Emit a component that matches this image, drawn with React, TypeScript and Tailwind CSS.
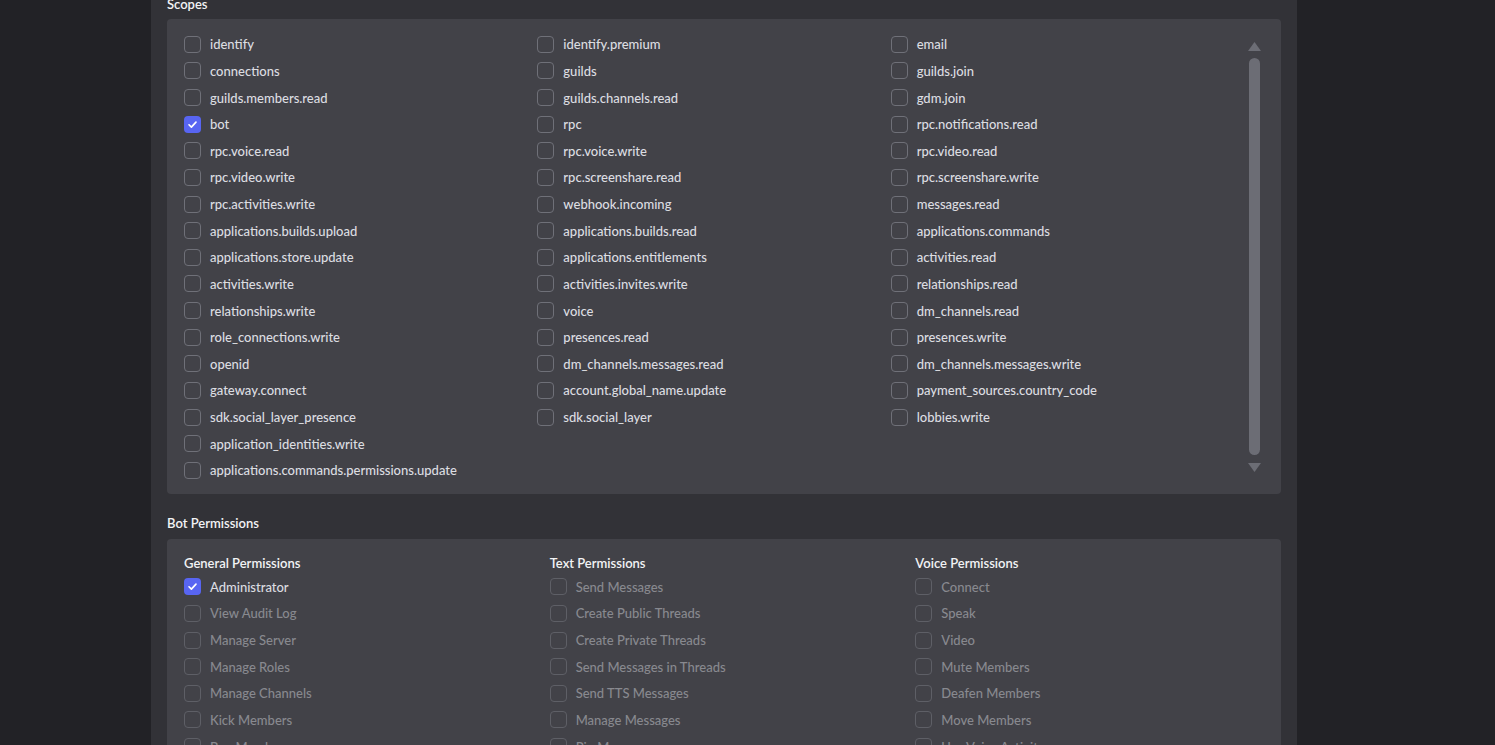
import clsx from 'clsx';

const scopeColumns: string[][] = [
  [
    'identify',
    'connections',
    'guilds.members.read',
    'bot',
    'rpc.voice.read',
    'rpc.video.write',
    'rpc.activities.write',
    'applications.builds.upload',
    'applications.store.update',
    'activities.write',
    'relationships.write',
    'role_connections.write',
    'openid',
    'gateway.connect',
    'sdk.social_layer_presence',
    'application_identities.write',
    'applications.commands.permissions.update',
  ],
  [
    'identify.premium',
    'guilds',
    'guilds.channels.read',
    'rpc',
    'rpc.voice.write',
    'rpc.screenshare.read',
    'webhook.incoming',
    'applications.builds.read',
    'applications.entitlements',
    'activities.invites.write',
    'voice',
    'presences.read',
    'dm_channels.messages.read',
    'account.global_name.update',
    'sdk.social_layer',
  ],
  [
    'email',
    'guilds.join',
    'gdm.join',
    'rpc.notifications.read',
    'rpc.video.read',
    'rpc.screenshare.write',
    'messages.read',
    'applications.commands',
    'activities.read',
    'relationships.read',
    'dm_channels.read',
    'presences.write',
    'dm_channels.messages.write',
    'payment_sources.country_code',
    'lobbies.write',
  ],
];

const permissionGroups: { title: string; items: string[] }[] = [
  {
    title: 'General Permissions',
    items: ['Administrator', 'View Audit Log', 'Manage Server', 'Manage Roles', 'Manage Channels', 'Kick Members', 'Ban Members', 'Create Instant Invite'],
  },
  {
    title: 'Text Permissions',
    items: ['Send Messages', 'Create Public Threads', 'Create Private Threads', 'Send Messages in Threads', 'Send TTS Messages', 'Manage Messages', 'Pin Messages', 'Embed Links'],
  },
  {
    title: 'Voice Permissions',
    items: ['Connect', 'Speak', 'Video', 'Mute Members', 'Deafen Members', 'Move Members', 'Use Voice Activity', 'Priority Speaker'],
  },
];

const checkedScopes = new Set(['bot']);

function Checkbox({ checked, disabled }: { checked?: boolean; disabled?: boolean }) {
  if (checked) {
    return (
      <span className="w-[17px] h-[17px] shrink-0 rounded-[4px] bg-[#5865f2] flex items-center justify-center">
        <svg width="11" height="11" viewBox="0 0 12 12" fill="none">
          <path d="M2.2 6.3 L4.8 8.8 L9.8 3.4" stroke="#ffffff" strokeWidth="1.8" strokeLinecap="round" strokeLinejoin="round" />
        </svg>
      </span>
    );
  }
  return (
    <span
      className={clsx(
        'w-[17px] h-[17px] shrink-0 rounded-[4px] border',
        disabled ? 'border-[#5e5f66]' : 'border-[#6f7078]'
      )}
    />
  );
}

function Row({ label, checked, disabled }: { label: string; checked?: boolean; disabled?: boolean }) {
  return (
    <div className="h-[26.625px] flex items-center gap-[9px]">
      <Checkbox checked={checked} disabled={disabled} />
      <span
        className={clsx(
          'text-[13px] leading-[16px] font-medium whitespace-nowrap',
          disabled ? 'text-[#88898f]' : 'text-[#dcdde1]'
        )}
      >
        {label}
      </span>
    </div>
  );
}

function ScrollTrack() {
  return (
    <div className="w-[13px] flex flex-col items-center pt-[23px]">
      <svg width="13" height="9" viewBox="0 0 13 9">
        <path d="M6.5 0 L13 9 L0 9 Z" fill="#6c6d75" />
      </svg>
      <div className="mt-[7px] w-[11px] h-[397px] rounded-full bg-[#6c6d75]" />
      <svg className="mt-[8px]" width="13" height="9" viewBox="0 0 13 9">
        <path d="M0 0 L13 0 L6.5 9 Z" fill="#6c6d75" />
      </svg>
    </div>
  );
}

export default function App() {
  return (
    <div
      className="h-[745px] overflow-hidden bg-[#222226]"
      style={{ fontFamily: 'Lato, "Noto Sans", sans-serif' }}
    >
      <div className="ml-[151px] w-[1146px] h-full bg-[#323237] px-[16px] flex flex-col">
        <div className="-mt-[4px] text-[13px] leading-[16px] font-semibold text-[#f2f3f5]">Scopes</div>

        <div className="mt-[7px] h-[475px] shrink-0 rounded-[4px] bg-[#424248] pl-[17px] pr-[20px] flex">
          <div className="w-[1061px] grid grid-cols-3 pt-[12px] content-start">
            {scopeColumns.map((col, i) => (
              <div key={i} className="flex flex-col">
                {col.map(s => (
                  <Row key={s} label={s} checked={checkedScopes.has(s)} />
                ))}
              </div>
            ))}
          </div>
          <div className="ml-[4px]">
            <ScrollTrack />
          </div>
        </div>

        <div className="mt-[21px] text-[13px] leading-[16px] font-semibold text-[#f2f3f5]">Bot Permissions</div>

        <div className="mt-[8px] shrink-0 rounded-[4px] bg-[#424248] pl-[17px] pt-[14px] pb-[16px]">
          <div className="w-[1097px] grid grid-cols-3">
            {permissionGroups.map(group => (
              <div key={group.title} className="flex flex-col">
                <div className="h-[20.5px] text-[13px] leading-[20px] font-semibold text-[#f2f3f5]">{group.title}</div>
                {group.items.map(item => (
                  <Row key={item} label={item} checked={item === 'Administrator'} disabled={item !== 'Administrator'} />
                ))}
              </div>
            ))}
          </div>
        </div>
      </div>
    </div>
  );
}
